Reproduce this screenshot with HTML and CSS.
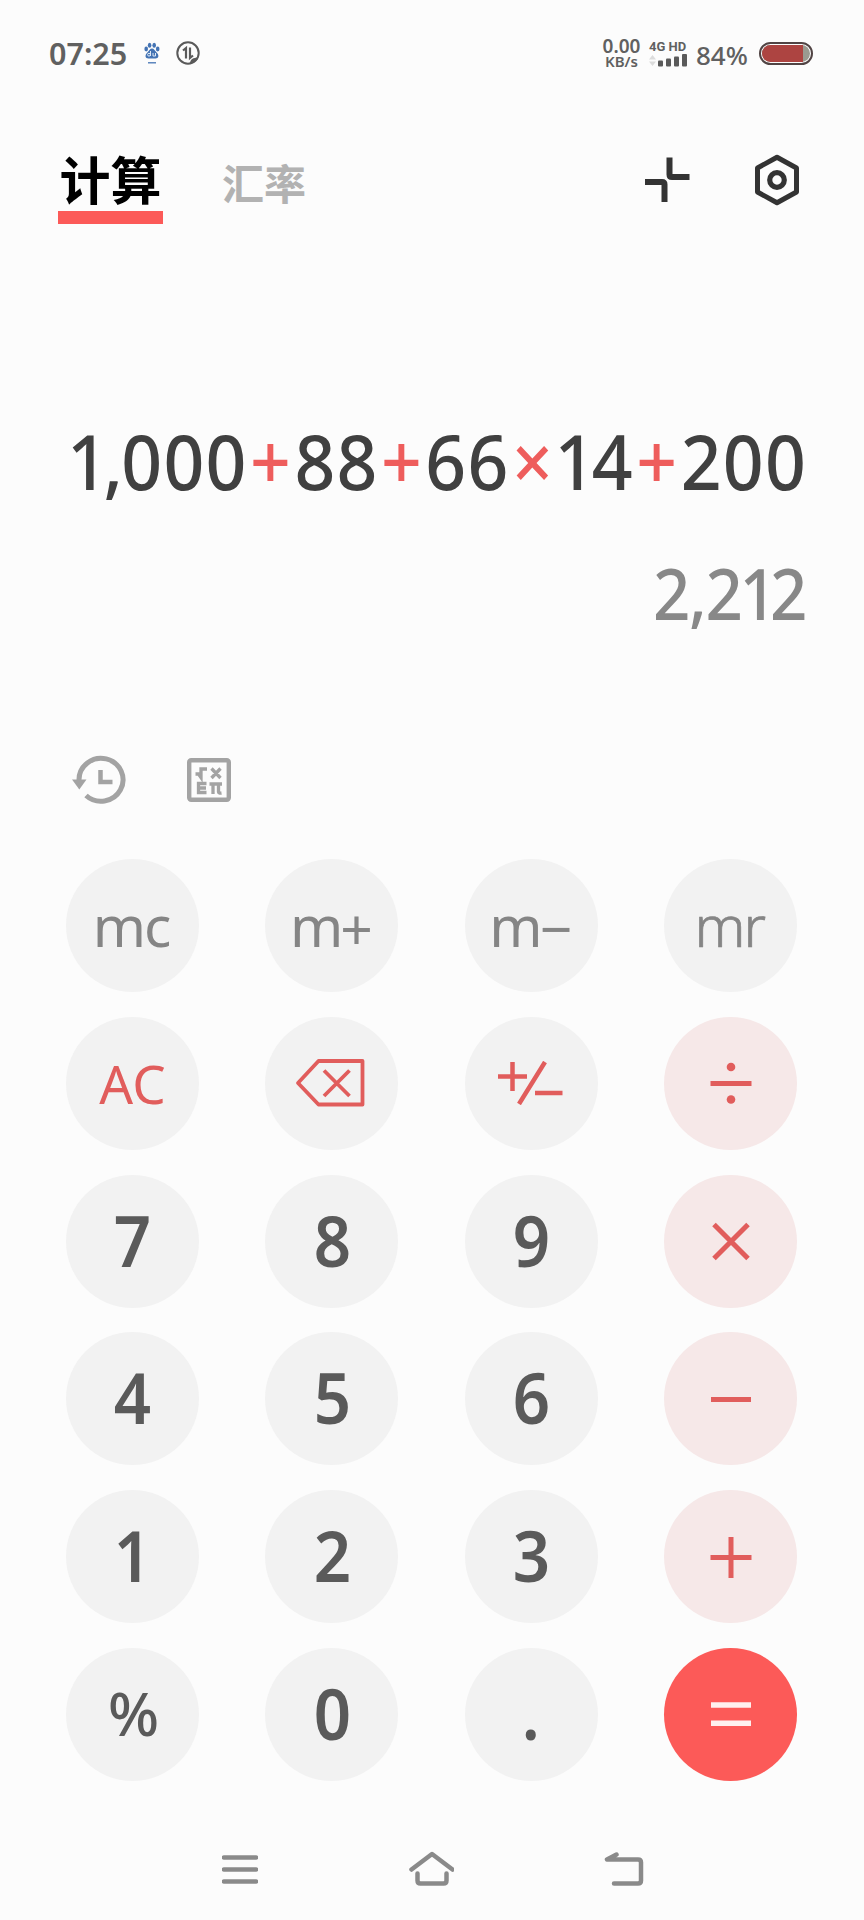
FILE: index.html
```html
<!DOCTYPE html>
<html lang="zh-CN">
<head>
  <meta charset="UTF-8">
  <title>计算器</title>
  <link rel="stylesheet" href="styles.css">
</head>
<body>
  <div class="status-bar">
    <span class="time">07:25</span>
    <svg class="paw" width="16" height="22" viewBox="0 0 16 22">
      <g fill="#4373b4">
        <ellipse cx="2.2" cy="7" rx="1.8" ry="2.4"/>
        <ellipse cx="5.6" cy="3.2" rx="1.8" ry="2.5"/>
        <ellipse cx="10.2" cy="3.2" rx="1.8" ry="2.5"/>
        <ellipse cx="13.7" cy="7" rx="1.8" ry="2.4"/>
        <path d="M8 6.500c2 0 2.700 2 4.200 3.500 3.500 3 2.500 6.500-.7 6.500h-7C1 16.500.4 13 3.800 10 5.300 8.500 6 6.500 8 6.500z"/>
      </g>
      <path d="M6.500 9v5M9 11v3h2.500v-3" fill="none" stroke="#dfe9f5" stroke-width="1"/>
      <circle cx="5" cy="12.700" r="1.400" fill="none" stroke="#dfe9f5"/>
      <path d="M4 20.800h8" stroke="#4373b4" stroke-width="1.300"/>
    </svg>
    <svg class="data" width="24" height="24" viewBox="0 0 24 24" fill="none" stroke="#5a5a5a">
      <circle cx="12" cy="12" r="10.700" stroke-width="2"/>
      <path d="M7 9.500l3-2.500v10.500M14 6.500v10.500l3-2.500" stroke-width="2.200"/>
      <path d="M14 22.500c0-4 3-6 8.500-6-1.500 3-4 5.500-8.500 6z" fill="#5a5a5a" stroke="none"/>
    </svg>
    <div class="speed"><span>0.00</span><span class="unit">KB/s</span></div>
    <div class="signal">
      <span>4G HD</span>
      <svg width="38" height="13" viewBox="0 0 38 13">
        <path d="M0 5.500L3.500 1 7 5.500zM0 7.500h7L3.500 12z" fill="#dcdcdc"/>
        <g fill="#5a5a5a">
          <rect x="9" y="6.500" width="5" height="6" rx="1"/>
          <rect x="17" y="4.500" width="5" height="8" rx="1"/>
          <rect x="25" y="2.500" width="5" height="10" rx="1"/>
          <rect x="33" y="0" width="5" height="12.500" rx="1"/>
        </g>
      </svg>
    </div>
    <span class="percent">84%</span>
    <div class="battery"><div class="battery-level"></div></div>
  </div>

  <div class="header">
    <div class="tab active">计算</div>
    <div class="tab">汇率</div>
    <div class="header-icons">
      <svg width="46" height="46" viewBox="0 0 46 46" fill="none" stroke="#333" stroke-width="6" stroke-linejoin="round">
        <path d="M25.500 0.500v17q0 2.500 2.500 2.500h17.500M1 25h17q2.500 0 2.500 2.500v17.500"/>
      </svg>
      <svg width="46" height="52" viewBox="0 0 46 52" fill="none" stroke="#333" stroke-linejoin="round">
        <path d="M23 3.200L42.500 14v24L23 48.800 3.500 38V14z" stroke-width="5"/>
        <circle cx="23" cy="26" r="7.300" stroke-width="5.200"/>
      </svg>
    </div>
  </div>

  <div class="display">
    <div class="expression"><span class="one">1</span><span class="comma">,</span>000<span class="op">+</span>88<span class="op">+</span>66<span class="op">×</span><span class="one">1</span>4<span class="op">+</span>200</div>
    <div class="result">2,2<span class="one">1</span>2</div>
  </div>

  <div class="tools">
    <svg width="54" height="50" viewBox="0 0 54 50" fill="none" stroke="#a3a3a3" stroke-width="5">
      <path d="M7 25a22 21.500 0 1 1 7 15.500"/>
      <path d="M0 24.500h14.500L7.300 34.500z" fill="#a3a3a3" stroke="none"/>
      <path d="M28.500 15v12h12" stroke-width="4.500"/>
    </svg>
    <svg width="44" height="44" viewBox="0 0 44 44" fill="none" stroke="#a3a3a3">
      <rect x="2.200" y="2.200" width="39.600" height="39.600" rx="2" stroke-width="4.400"/>
      <path d="M8.500 16h3l2.500 3.500v-8.500h6M24.500 10.500l9 9.500M33.500 10.500l-9 9.500M19.500 25.500h-8v9h8M11.500 30h7.500M22.500 26h12.500M26 27v9M31.500 27v7q0 1.500 3 1" stroke-width="3.300"/>
    </svg>
  </div>

  <div class="keypad">
    <button class="key mem">mc</button>
    <button class="key mem"><span>m<span class="sign">+</span></span></button>
    <button class="key mem"><span>m<span class="sign">−</span></span></button>
    <button class="key mem thin">mr</button>

    <button class="key clear">AC</button>
    <button class="key red">
      <svg width="74" height="48" viewBox="0 0 74 48" stroke-width="3.800" stroke-linejoin="round">
        <path d="M3 24L23.500 2h44v43.500h-44zM29 11.500l25.500 25.500M54.500 11.500L29 37"/>
      </svg>
    </button>
    <button class="key red">
      <svg width="68" height="44" viewBox="0 0 68 44" stroke-width="4.500">
        <path d="M1 15.500h29M15.500 1v29M48 1L22 43M38 32h27.500"/>
      </svg>
    </button>
    <button class="key operator">
      <svg width="42" height="42" viewBox="0 0 42 42" stroke-width="5">
        <path d="M0.500 21.500h41"/>
        <circle cx="21" cy="5" r="4.300" class="dot"/>
        <circle cx="21" cy="37.500" r="4.300" class="dot"/>
      </svg>
    </button>

    <button class="key"><span class="num">7</span></button>
    <button class="key"><span class="num">8</span></button>
    <button class="key"><span class="num">9</span></button>
    <button class="key operator">
      <svg width="42" height="42" viewBox="0 0 42 42" stroke-width="5"><path d="M4 4.500l34 34M38 4.500L4 38.500"/></svg>
    </button>

    <button class="key"><span class="num">4</span></button>
    <button class="key"><span class="num">5</span></button>
    <button class="key"><span class="num">6</span></button>
    <button class="key operator">
      <svg width="42" height="42" viewBox="0 0 42 42" stroke-width="5"><path d="M1 21.500h40"/></svg>
    </button>

    <button class="key"><span class="num">1</span></button>
    <button class="key"><span class="num">2</span></button>
    <button class="key"><span class="num">3</span></button>
    <button class="key operator">
      <svg width="42" height="42" viewBox="0 0 42 42" stroke-width="5"><path d="M0.500 21.500h41M21 1v41"/></svg>
    </button>

    <button class="key mod">%</button>
    <button class="key"><span class="num">0</span></button>
    <button class="key"><span class="num">.</span></button>
    <button class="key equals">
      <svg width="42" height="42" viewBox="0 0 42 42" stroke-width="5.500"><path d="M1 12h40M1 30.300h40"/></svg>
    </button>
  </div>

  <div class="nav-bar">
    <svg width="36" height="34" viewBox="0 0 36 34"><path d="M2 7.500h32M2 19.500h32M2 31.500h32"/></svg>
    <svg width="46" height="36" viewBox="0 0 46 36"><path d="M3.500 19.500L24 4l20.500 15.500M9.500 23.500v7q0 3 3 3h23q3 0 3-3v-7"/></svg>
    <svg width="40" height="36" viewBox="0 0 40 36"><path d="M12.500 4.500L3 9.500h31q3 0 3 3v18q0 3-3 3H10"/></svg>
  </div>
</body>
</html>
```

FILE: styles.css
```css
:root {
  --bg: #fcfcfc;
  --key-bg: #f2f2f2;
  --red: #fc5a58;
  --red-line: #e15d5c;
  --status: #606060;
}

* {
  box-sizing: border-box;
}

body {
  width: 864px;
  height: 1920px;
  margin: 0;
  overflow: hidden;
  display: flex;
  flex-direction: column;
  background: var(--bg);
  font-family: "Noto Sans", "Noto Sans CJK SC", sans-serif;
}

svg {
  display: block;
  flex: none;
}

/* status bar */
.status-bar {
  height: 106px;
  padding: 0 51px 0 49px;
  display: flex;
  align-items: center;
  color: var(--status);
  font-weight: 500;
  line-height: 1;
}

.time {
  width: 79px;
  font-size: 30.500px;
  font-weight: 600;
}

.paw {
  margin-left: 16px;
}

.data {
  margin-left: 16px;
}

.speed {
  margin-left: auto;
  width: 41px;
  display: flex;
  flex-direction: column;
  align-items: center;
  font-size: 19px;
  font-weight: 600;
  line-height: 16px;
}

.speed .unit {
  font-size: 15px;
  line-height: 14px;
}

.signal {
  margin-left: 7px;
  width: 39px;
  font: bold 13px/15px Roboto, sans-serif;
  white-space: nowrap;
}

.percent {
  margin-left: 8px;
  width: 54px;
  font-size: 26px;
  padding-top: 3px;
}

.battery {
  margin-left: 9px;
  width: 54px;
  height: 23px;
  padding: 1px;
  border: 2px solid #514444;
  border-radius: 12px;
  background: #9a9a90;
  background-clip: content-box;
}

.battery-level {
  width: 41px;
  height: 100%;
  background: #ad4441;
  border-radius: 9px 0 0 9px;
}

/* tabs */
.header {
  height: 144px;
  padding: 0 64px 0 58px;
  display: flex;
  align-items: flex-start;
}

.tab {
  margin: 52px 0 0 59px;
  font-size: 42px;
  font-weight: 700;
  line-height: 52px;
  color: #b2b2b2;
}

.tab.active {
  margin: 44px 0 0;
  width: 105px;
  height: 74px;
  font-size: 51px;
  line-height: 60px;
  text-align: center;
  color: #000;
  border-bottom: 13px solid var(--red);
}

.header-icons {
  margin: 48px 0 0 auto;
  display: flex;
  align-items: center;
  gap: 64px;
}

/* expression and result */
.display {
  height: 470px;
  padding-right: 57px;
  font-weight: 500;
  text-align: right;
  white-space: nowrap;
}

.expression {
  padding-top: 161px;
  font-size: 76px;
  line-height: 100px;
  letter-spacing: 1.300px;
  color: #404040;
  transform: scaleX(0.94);
  transform-origin: right;
}

.result {
  padding: 32px 1px 0 0;
  font-size: 71px;
  line-height: 100px;
  letter-spacing: -1.500px;
  color: #888;
  transform: scaleX(0.92);
  transform-origin: right;
}

.op {
  color: #ee5d5c;
  margin: 0 2.500px;
}

.one {
  margin: 0 -6px 0 -2px;
}

.expression .one {
  margin-right: -5px;
}

.comma {
  margin: 0 -3px 0 -1px;
}

/* history and formula shortcuts */
.tools {
  height: 139px;
  padding: 35px 0 0 72px;
  display: flex;
  align-items: flex-start;
  gap: 61px;
}

.tools svg + svg {
  margin-top: 3px;
}

/* keys */
.keypad {
  padding: 0 66px;
  display: grid;
  grid-template-columns: repeat(4, 133px);
  grid-auto-rows: 133px;
  column-gap: 66.400px;
  row-gap: 24.800px;
}

.key {
  display: flex;
  align-items: center;
  justify-content: center;
  padding: 0 0 4px;
  border: none;
  border-radius: 50%;
  background: var(--key-bg);
  color: #5a5a5a;
  font-family: inherit;
  font-size: 71px;
  font-weight: 600;
  line-height: 1;
}

.key svg {
  fill: none;
  stroke: var(--red-line);
}

.key .dot {
  fill: var(--red-line);
  stroke: none;
}

.num {
  transform: scaleX(0.92);
}

.mem {
  padding: 0 3px 0 0;
  font-size: 57px;
  font-weight: 400;
  letter-spacing: -2px;
  color: #858585;
}

.mem.thin {
  font-weight: 300;
  -webkit-text-stroke: 0.700px #858585;
}

.sign {
  margin-left: -1px;
  vertical-align: -3px;
  line-height: 0;
}

.clear {
  padding: 0;
  font-size: 53px;
  font-weight: 400;
  color: var(--red-line);
}

.red,
.operator,
.equals {
  padding: 0;
}

.operator {
  background: #f6e8e8;
}

.mod {
  padding: 0 0 2px 2px;
  font-size: 60px;
  font-weight: 500;
}

.equals {
  background: var(--red);
}

.equals svg {
  stroke: #fff0ee;
}

/* system navigation */
.nav-bar {
  padding: 69px 220px 0 222px;
  display: flex;
  justify-content: space-between;
}

.nav-bar svg {
  fill: none;
  stroke: #8a8a8a;
  stroke-width: 4.500;
  stroke-linecap: round;
  stroke-linejoin: round;
}
```
